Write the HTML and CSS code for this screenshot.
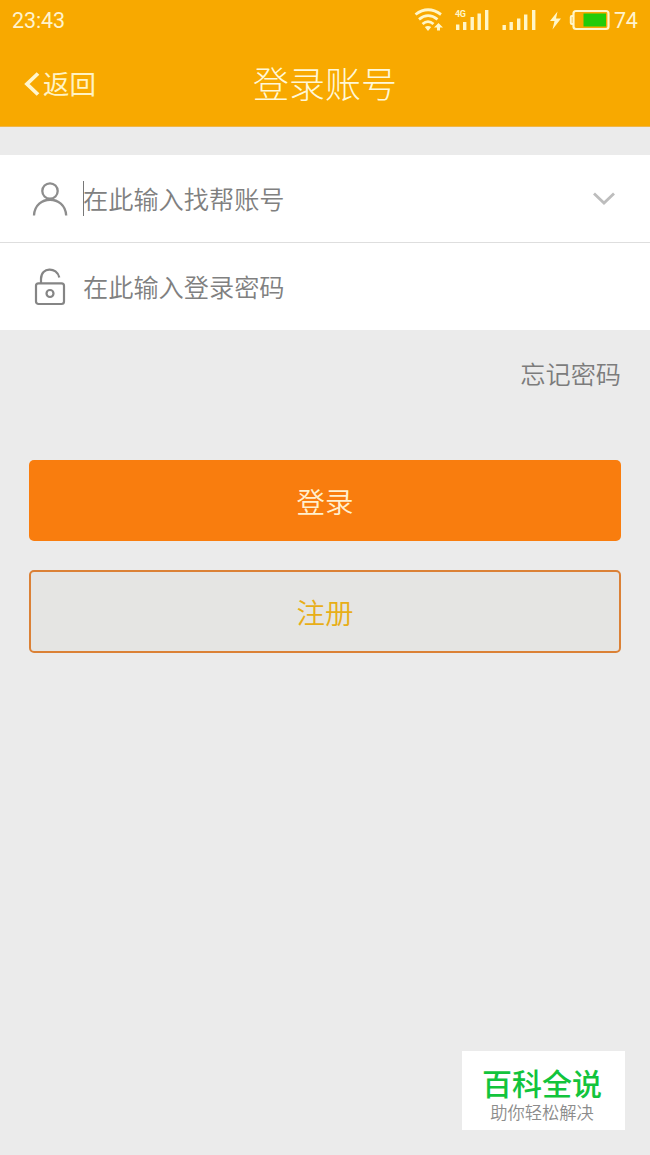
FILE: index.html
```html
<!DOCTYPE html>
<html lang="zh-CN">
<head>
<meta charset="utf-8">
<title>登录账号</title>
<link rel="stylesheet" href="styles.css">
</head>
<body>
<div class="screen">
  <header class="header">
    <div class="status">
      <span class="clock">23:43</span>
      <svg class="status-icons" width="200" height="40" viewBox="0 0 200 40">
        <g fill="none" stroke="#fff6c8" stroke-width="2.800">
          <path d="M5.500 14.500Q18 5 31 14.500"/>
          <path d="M9 19.300Q18 12 27.500 19.300"/>
          <path d="M12.500 24Q18 19.200 23.500 24"/>
        </g>
        <path d="M14.800 27Q18 25 21.200 27L18 31Z" fill="#fff6c8"/>
        <path d="M28.500 23l4.500 4.500h-3v3h-3v-3h-3z" fill="#fff6c8"/>
        <g fill="#fff6c8">
          <path d="M46 24.500h3.400v5.500h-3.400zM53 22h3.400v8h-3.400zM60.500 17h3.400v13h-3.400zM67.500 13.500h3.400v16.500h-3.400zM75 10h3.400v20h-3.400z"/>
          <path d="M92.500 25h3.400v5h-3.400zM99.500 22h3.400v8h-3.400zM107 18.500h3.400v11.500h-3.400zM114 14.500h3.400v15.500h-3.400zM122 10h3.400v20h-3.400z"/>
          <path d="M147.500 11.500L140 21h4.500l-2 8.500L151 18.500h-5z"/>
        </g>
        <text class="network" x="45" y="17">4G</text>
        <path d="M163.500 16h-1.700q-1 0-1 1v6q0 1 1 1h1.700" fill="none" stroke="#fff6c8" stroke-width="2"/>
        <rect x="163.500" y="11" width="35" height="18" rx="2.500" fill="none" stroke="#fff6c8" stroke-width="2.200"/>
        <rect x="173.500" y="13.500" width="22.500" height="13" fill="#21cb08"/>
      </svg>
      <span class="battery">74</span>
    </div>
    <nav class="nav">
      <a class="back"><svg width="16" height="26" viewBox="0 0 16 26"><path d="M14 3.500L3 14L14 24.500" fill="none" stroke="#fff6ce" stroke-width="3.800"/></svg><span>返回</span></a>
      <h1 class="title">登录账号</h1>
    </nav>
  </header>
  <main>
    <section class="fields">
      <div class="field">
        <svg class="field-icon" width="36" height="38" viewBox="0 0 36 38"><g fill="none" stroke="#8d8d8d" stroke-width="2.300"><circle cx="18" cy="11" r="7.700"/><path d="M2 35.500C3 14.500 33 14.500 34.200 35.500"/></g></svg>
        <span class="caret"></span>
        <span class="placeholder">在此输入找帮账号</span>
        <svg class="chevron" width="24" height="16" viewBox="0 0 24 16"><path d="M2 2.500L12 12L22 2.500" fill="none" stroke="#bdbdbd" stroke-width="2.800"/></svg>
      </div>
      <div class="field">
        <svg class="field-icon" width="36" height="38" viewBox="0 0 36 38"><g fill="none" stroke="#858585" stroke-width="2.200"><rect x="4" y="15.300" width="28" height="20.700" rx="2.500"/><path d="M9 15V11C9 -1.300 25 -1.300 27.300 9.500"/><circle cx="18" cy="25.500" r="3.500"/></g></svg>
        <span class="caret caret-off"></span>
        <span class="placeholder">在此输入登录密码</span>
      </div>
    </section>
    <a class="forgot">忘记密码</a>
    <div class="actions">
      <button class="button login">登录</button>
      <button class="button register">注册</button>
    </div>
  </main>
  <aside class="brand">
    <strong class="brand-name">百科全说</strong>
    <span class="brand-line">助你轻松解决</span>
  </aside>
</div>
</body>
</html>
```

FILE: styles.css
```css
* { box-sizing: border-box; }
body {
  margin: 0;
  font-family: "Noto Sans CJK SC", sans-serif;
  font-weight: 350;
  background: #ebebeb;
}
.screen { position: relative; height: 1155px; overflow: hidden; background: #ebebeb; }
.header { height: 127px; background: #f8a900; border-bottom: 1px solid #efb64b; }
.status {
  display: flex;
  align-items: center;
  height: 40px;
  padding: 0 12px;
  color: #fff3ce;
  font: 400 21.5px/40px Roboto, sans-serif;
}
.clock { letter-spacing: -0.1px; padding-top: 1px; }
.status-icons { margin-left: auto; }
.network { font: 700 9px Roboto, sans-serif; fill: #fff6c8; letter-spacing: -0.5px; }
.battery { width: 24px; margin-left: 4px; padding-top: 1px; letter-spacing: -0.3px; }
.nav {
  display: grid;
  grid-template-columns: 1fr auto 1fr;
  align-items: center;
  height: 84px;
  padding: 0 24px;
}
.back { display: flex; align-items: center; gap: 3px; padding-top: 2px; font-size: 26.5px; font-weight: 400; line-height: 38px; color: #fff3c4; }
.title { margin: 0; font-size: 36px; font-weight: 300; line-height: 50px; color: #fff8d8; }
.fields { margin-top: 28px; height: 175px; background: #fff; }
.field { display: flex; align-items: center; height: 88px; padding: 0 34px 0 32px; }
.field + .field { height: 87px; }
.field:first-child { border-bottom: 1px solid #dedede; }
.caret { width: 1px; height: 35px; margin-left: 15px; background: #777; }
.caret-off { visibility: hidden; }
.placeholder { padding-bottom: 2px; margin-left: -1px; font-size: 25.2px; line-height: 38px; color: #808080; }
.chevron { margin-left: auto; }
.forgot { display: block; margin: 24px 29px 0; text-align: right; font-size: 25.2px; line-height: 38px; color: #7c7c7c; }
.actions { display: flex; flex-direction: column; gap: 29px; margin: 68px 29px 0; }
.button {
  display: flex;
  align-items: center;
  justify-content: center;
  height: 81px;
  padding: 0;
  border: 0;
  border-radius: 5px;
  font: 350 28.5px/40px "Noto Sans CJK SC", sans-serif;
}
.login { background: #f97d0e; color: #fff0cf; }
.register { height: 83px; background: #e5e5e3; border: 2px solid #db8136; color: #e8ae18; }
.brand {
  position: absolute;
  left: 462px;
  top: 1051px;
  width: 163px;
  height: 79px;
  padding-top: 16px;
  display: flex;
  flex-direction: column;
  align-items: center;
  background: #fff;
}
.brand-name { font-size: 30px; line-height: 31px; font-weight: 500; color: #12c43c; padding-right: 3px; }
.brand-line { margin-top: 5px; font-size: 17.3px; line-height: 18px; color: #8c8c8c; padding-right: 3px; }
```
